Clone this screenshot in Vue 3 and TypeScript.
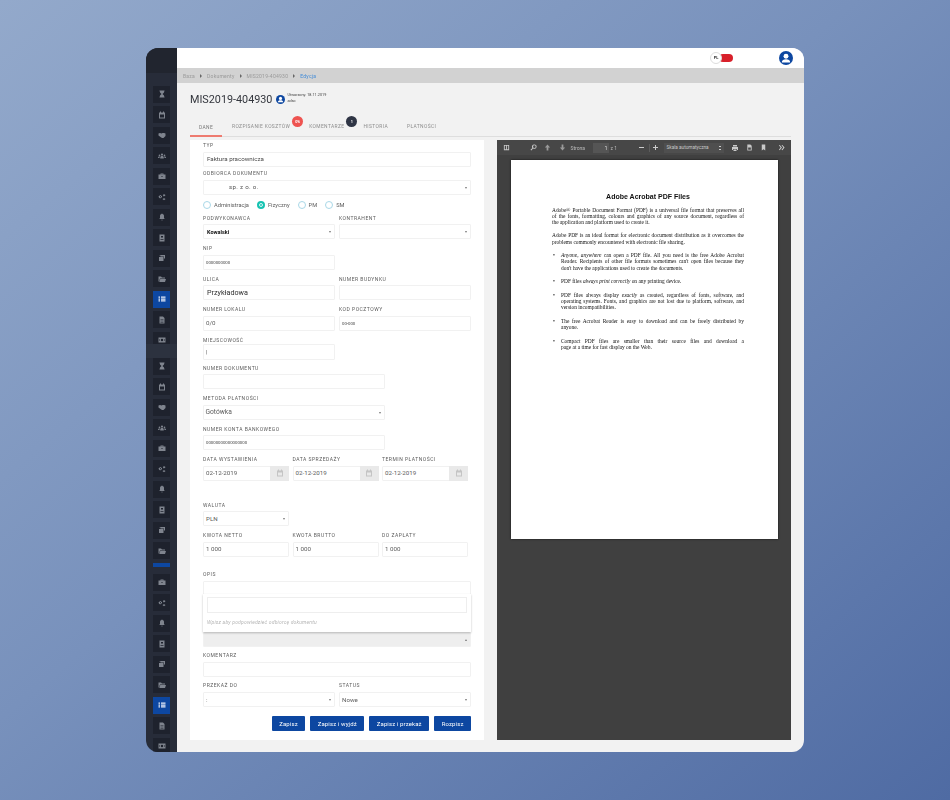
<template>
  <div class="page">
    <div class="window">
      <aside class="sidebar">
        <div class="logo"></div>
        <div class="icons first">
          <div v-for="(name, i) in firstIcons" :key="'a' + i" class="side-item" :class="{ active: name === 'list' }">
            <svg viewBox="0 0 16 16"><path :d="iconPaths[name]" /></svg>
          </div>
        </div>
        <div class="side-sep"></div>
        <div class="icons">
          <div v-for="(name, i) in secondIcons" :key="'b' + i" class="side-item">
            <svg viewBox="0 0 16 16"><path :d="iconPaths[name]" /></svg>
          </div>
          <div class="side-bar"></div>
          <div v-for="(name, i) in thirdIcons" :key="'c' + i" class="side-item" :class="{ active: name === 'list' }">
            <svg viewBox="0 0 16 16"><path :d="iconPaths[name]" /></svg>
          </div>
        </div>
      </aside>

      <div class="main">
        <header class="topbar">
          <div class="lang">
            <span class="lang-pill"></span>
            <span class="lang-knob">PL</span>
          </div>
          <svg class="avatar" viewBox="0 0 24 24">
            <circle cx="12" cy="12" r="12" fill="#0d47a1" />
            <circle cx="12" cy="9" r="4.2" fill="#fff" />
            <path d="M4.8 19.5c0-3.8 3-5.5 7.2-5.5s7.2 1.700 7.200 5.500z" fill="#fff" />
          </svg>
        </header>

        <nav class="crumbs">
          <span>Baza</span><i class="arrow"></i>
          <span>Dokumenty</span><i class="arrow"></i>
          <span>MIS2019-404930</span><i class="arrow"></i>
          <span class="current">Edycja</span>
        </nav>

        <div class="content">
          <div class="title-row">
            <h1>MIS2019-404930</h1>
            <svg class="title-user" viewBox="0 0 24 24">
              <circle cx="12" cy="12" r="12" fill="#0d47a1" />
              <circle cx="12" cy="9" r="4.2" fill="#fff" />
              <path d="M4.800 19.500c0-3.800 3-5.500 7.200-5.500s7.200 1.700 7.200 5.500z" fill="#fff" />
            </svg>
            <div class="created">
              <div>Utworzony: 18.11.2019</div>
              <div>adsc</div>
            </div>
          </div>

          <div class="tabs">
            <span class="tab active">DANE</span>
            <span class="tab">ROZPISANIE KOSZTÓW<b class="badge red">0%</b></span>
            <span class="tab">KOMENTARZE<b class="badge dark">1</b></span>
            <span class="tab">HISTORIA</span>
            <span class="tab">PŁATNOŚCI</span>
          </div>

          <div class="columns">
            <form class="form" @submit.prevent>
              <div class="field">
                <label>TYP</label>
                <div class="input small">Faktura pracownicza</div>
              </div>
              <div class="field tight">
                <label>ODBIORCA DOKUMENTU</label>
                <div class="input select"><span class="recipient">sp. z o. o.</span></div>
              </div>

              <div class="radios">
                <span class="radio"></span><span class="radio-text">Administracja</span>
                <span class="radio on"></span><span class="radio-text">Fizyczny</span>
                <span class="radio"></span><span class="radio-text">PM</span>
                <span class="radio"></span><span class="radio-text">SM</span>
              </div>

              <div class="row after-radios">
                <div class="field half">
                  <label>PODWYKONAWCA</label>
                  <div class="input select strong">Kowalski</div>
                </div>
                <div class="field half">
                  <label>KONTRAHENT</label>
                  <div class="input select"></div>
                </div>
              </div>
              <div class="row">
                <div class="field half">
                  <label>NIP</label>
                  <div class="input tiny">0000000000</div>
                </div>
              </div>
              <div class="row">
                <div class="field half">
                  <label>ULICA</label>
                  <div class="input big dark">Przykładowa</div>
                </div>
                <div class="field half">
                  <label>NUMER BUDYNKU</label>
                  <div class="input"></div>
                </div>
              </div>
              <div class="row">
                <div class="field half">
                  <label>NUMER LOKALU</label>
                  <div class="input">0/0</div>
                </div>
                <div class="field half">
                  <label>KOD POCZTOWY</label>
                  <div class="input tiny">00-000</div>
                </div>
              </div>
              <div class="row">
                <div class="field half close">
                  <label>MIEJSCOWOŚĆ</label>
                  <div class="input">|</div>
                </div>
              </div>
              <div class="row short">
                <div class="field wide">
                  <label>NUMER DOKUMENTU</label>
                  <div class="input"></div>
                </div>
              </div>
              <div class="row">
                <div class="field wide">
                  <label>METODA PŁATNOŚCI</label>
                  <div class="input medium select">Gotówka</div>
                </div>
              </div>
              <div class="row">
                <div class="field wide">
                  <label>NUMER KONTA BANKOWEGO</label>
                  <div class="input tiny">00000000000000000</div>
                </div>
              </div>
              <div class="row thirds">
                <div v-for="label in dateLabels" :key="label" class="field third">
                  <label>{{ label }}</label>
                  <div class="input date">
                    <span>02-12-2019</span>
                    <span class="addon">
                      <svg viewBox="0 0 16 16"><path :d="iconPaths.calendar" /></svg>
                    </span>
                  </div>
                </div>
              </div>
              <div class="row currency">
                <div class="field third">
                  <label>WALUTA</label>
                  <div class="input select">PLN</div>
                </div>
              </div>
              <div class="row thirds">
                <div v-for="label in amountLabels" :key="label" class="field third">
                  <label>{{ label }}</label>
                  <div class="input">1 000</div>
                </div>
              </div>
              <div class="field opis">
                <label>OPIS</label>
                <div class="input"></div>
                <div class="input select up grey"></div>
                <div class="dropdown">
                  <div class="dropdown-input"></div>
                  <div class="dropdown-hint">Wpisz aby podpowiedzieć odbiorcę dokumentu</div>
                </div>
              </div>
              <div class="field komentarz">
                <label>KOMENTARZ</label>
                <div class="input"></div>
              </div>
              <div class="row">
                <div class="field half">
                  <label>PRZEKAŻ DO</label>
                  <div class="input select">:</div>
                </div>
                <div class="field half">
                  <label>STATUS</label>
                  <div class="input select">Nowe</div>
                </div>
              </div>
              <div class="buttons">
                <button>Zapisz</button>
                <button>Zapisz i wyjdź</button>
                <button>Zapisz i przekaż</button>
                <button>Rozpisz</button>
              </div>
            </form>

            <section class="viewer">
              <div class="toolbar">
                <svg class="t-panel" viewBox="0 0 16 16"><path d="M2 2h12v12H2zM4 4v8h3V4zM9 4v8h3V4z" fill-rule="evenodd" /></svg>
                <svg class="t-search" viewBox="0 0 16 16"><path d="M10 1a5 5 0 1 1-3 9l-4 5-2-2 4.500-4A5 5 0 0 1 10 1zm0 2a3 3 0 1 0 0 6 3 3 0 0 0 0-6z" fill-rule="evenodd" /></svg>
                <svg class="t-nav" viewBox="0 0 16 16"><path d="M8 1l6 7h-4v7H6V8H2z" /></svg>
                <svg class="t-nav" viewBox="0 0 16 16"><path d="M8 15l6-7h-4V1H6v7H2z" /></svg>
                <span class="t-label">Strona</span>
                <span class="t-page">1</span>
                <span class="t-of">z 1</span>
                <span class="t-minus"></span>
                <span class="t-sep"></span>
                <span class="t-plus"></span>
                <span class="t-scale">Skala automatyczna<i></i></span>
                <svg class="t-print" viewBox="0 0 16 16"><path d="M4 2h8v3H4zM2 6h12v6h-2v-2H4v2H2zM5 11h6v3H5z" /></svg>
                <svg class="t-doc" viewBox="0 0 16 16"><path d="M3 1h7l3 3v11H3zM5 8v5h6V8z" fill-rule="evenodd" /></svg>
                <svg class="t-mark" viewBox="0 0 16 16"><path d="M4 1h8v14l-4-3-4 3z" /></svg>
                <svg class="t-more" viewBox="0 0 16 16"><path d="M2 3l2-1 5 6-5 6-2-1 4-5zM8 3l2-1 5 6-5 6-2-1 4-5z" /></svg>
              </div>
              <div class="pdf-body">
                <article class="pdf-page">
                  <h2>Adobe Acrobat PDF Files</h2>
                  <p>
                    <span class="line j">Adobe® Portable Document Format (PDF) is a universal file format that preserves all</span>
                    <span class="line j">of the fonts, formatting, colours and graphics of any source document, regardless of</span>
                    <span class="line">the application and platform used to create it.</span>
                  </p>
                  <p>
                    <span class="line j">Adobe PDF is an ideal format for electronic document distribution as it overcomes the</span>
                    <span class="line">problems commonly encountered with electronic file sharing.</span>
                  </p>
                  <ul>
                    <li>
                      <span class="line j"><em>Anyone, anywhere</em> can open a PDF file. All you need is the free Adobe Acrobat</span>
                      <span class="line j">Reader. Recipients of other file formats sometimes can't open files because they</span>
                      <span class="line">don't have the applications used to create the documents.</span>
                    </li>
                    <li>
                      <span class="line">PDF files <em>always print correctly</em> on any printing device.</span>
                    </li>
                    <li>
                      <span class="line j">PDF files always display <em>exactly</em> as created, regardless of fonts, software, and</span>
                      <span class="line j">operating systems. Fonts, and graphics are not lost due to platform, software, and</span>
                      <span class="line">version incompatibilities.</span>
                    </li>
                    <li>
                      <span class="line j">The free Acrobat Reader is easy to download and can be freely distributed by</span>
                      <span class="line">anyone.</span>
                    </li>
                    <li>
                      <span class="line j">Compact PDF files are smaller than their source files and download a</span>
                      <span class="line">page at a time for fast display on the Web.</span>
                    </li>
                  </ul>
                </article>
              </div>
            </section>
          </div>
        </div>
      </div>
    </div>
  </div>
</template>

<script setup lang="ts">
const iconPaths: Record<string, string> = {
  hourglass: 'M3 1h10v2h-1v2L9 8l3 3v2h1v2H3v-2h1v-2l3-3-3-3V3H3z',
  calendar: 'M4 1h2v2h4V1h2v2h2v12H2V3h2zM4 7v6h8V7z',
  hands: 'M1 5l3-1 3 1 2-1 3 0 3 1v5l-2 2-2 2-3 0-3-2-4-3z',
  users: 'M8 3a2.200 2.200 0 1 1 0 4.400A2.200 2.200 0 0 1 8 3zM3 5a1.700 1.700 0 1 1 0 3.400A1.700 1.700 0 0 1 3 5zm10 0a1.700 1.700 0 1 1 0 3.400A1.700 1.700 0 0 1 13 5zM4.500 13v-2c0-2 1.500-3 3.500-3s3.500 1 3.500 3v2zM0 12v-1c0-1 1-2 3-2l.5 0-.5 3zm16 0v-1c0-1-1-2-3-2l-.5 0 .5 3z',
  briefcase: 'M5 3h6v2h4v9H1V5h4zM6.500 4.500V5h3v-.5zM7 8v2h2V8z',
  cogs: 'M5.500 4l1 1.500 1.500.5v2.500l-1.500.5-1 1.500-2-.2L2 9 1 7.500 2 6l1.500-1.200zM5 6.200a1.200 1.200 0 1 0 0 2.400 1.200 1.200 0 0 0 0-2.400zM12 2l1 1 1.500.5v2L13 6l-1 1-1.500-1L10 4l1-1zM12 10l1 .8 1.500.7v1.500l-1.500.7-1 .8-1-.8-1.500-.7v-1.500l1.500-.7z',
  bell: 'M8 1a1 1 0 0 1 1 1.200c2 .5 3 2 3 4v4l1.500 2h-11L4 10.200v-4c0-2 1-3.500 3-4A1 1 0 0 1 8 1zM6.500 13.500h3a1.500 1.500 0 0 1-3 0z',
  book: 'M3 1h10v14H3zM6 4v3h4V4zM5 10v1.500h6V10z',
  clone: 'M5 2h9v7h-2V5H5zM2 6h9v8H2zM3 3h9v1H3z',
  folder: 'M1 3h5l2 2h6v2H4l-2 6H1zM4.500 8H16l-2 6H2.500z',
  list: 'M1 3h3v2.500H1zM6 3h9v2.500H6zM1 6.800h3v2.500H1zM6 6.800h9v2.500H6zM1 10.500h3V13H1zM6 10.500h9V13H6z',
  file: 'M3 1h7l3 3v11H3zM5 7v1h6V7zM5 9.500v1h6v-1zM5 12v1h6v-1z',
  money: 'M1 3h14v10H1zM8 5.500a2.500 2.500 0 1 0 0 5 2.500 2.500 0 0 0 0-5zM2.500 6v4h1V6zM12.500 6v4h1V6z',
}

const base = ['hourglass', 'calendar', 'hands', 'users', 'briefcase', 'cogs', 'bell', 'book', 'clone', 'folder']
const firstIcons = [...base, 'list', 'file', 'money']
const secondIcons = base
const thirdIcons = ['briefcase', 'cogs', 'bell', 'book', 'clone', 'folder', 'list', 'file', 'money']

const dateLabels = ['DATA WYSTAWIENIA', 'DATA SPRZEDAŻY', 'TERMIN PŁATNOŚCI']
const amountLabels = ['KWOTA NETTO', 'KWOTA BRUTTO', 'DO ZAPŁATY']
</script>

<style>
body {
  margin: 0;
  background: #6a86b4;
}
</style>

<style scoped>
.page {
  width: 950px;
  height: 800px;
  display: flex;
  align-items: center;
  justify-content: center;
  background: linear-gradient(140deg, #93a9cb 0%, #7891bc 45%, #4f6ba3 100%);
  font-family: Roboto, "Liberation Sans", sans-serif;
  overflow: hidden;
}

.window {
  width: 658px;
  height: 704px;
  display: flex;
  border-radius: 12px;
  overflow: hidden;
  filter: blur(0.45px);
}

.sidebar {
  width: 31px;
  flex: none;
  height: 704px;
  overflow: hidden;
  background: #272c39;
}

.logo {
  height: 37.5px;
  background: linear-gradient(#21252f 0 25px, #272c39 25px);
}

.icons {
  display: flex;
  flex-direction: column;
  align-items: center;
  gap: 3.5px;
}

.icons.first {
  height: 258.5px;
  overflow: hidden;
}

.side-item {
  width: 17px;
  height: 17px;
  flex: none;
  display: flex;
  align-items: center;
  justify-content: center;
  background: #1e222d;
}

.side-item svg {
  width: 8px;
  height: 8px;
  fill: #7f848e;
}

.side-item.active {
  background: #0d47a1;
}

.side-item.active svg {
  fill: #e8eefa;
}

.side-sep {
  height: 13.5px;
  background: #2c323f;
}

.side-bar {
  width: 17px;
  height: 4px;
  background: #0d47a1;
  flex: none;
  margin-bottom: 3.5px;
}

.main {
  flex: 1;
  min-width: 0;
  display: flex;
  flex-direction: column;
  background: #f2f2f2;
}

.topbar {
  height: 20px;
  flex: none;
  display: flex;
  align-items: center;
  justify-content: flex-end;
  padding-right: 11px;
  background: #fff;
}

.lang {
  position: relative;
  width: 23px;
  height: 12px;
  margin-right: 46px;
}

.lang-pill {
  position: absolute;
  left: 9px;
  top: 2px;
  width: 14px;
  height: 8px;
  border-radius: 4px;
  background: #d8202a;
}

.lang-knob {
  position: absolute;
  left: 0;
  top: 0;
  width: 12px;
  height: 12px;
  box-sizing: border-box;
  border: 1px solid #ddd;
  border-radius: 50%;
  background: #fff;
  color: #333;
  font-size: 4px;
  font-weight: 700;
  line-height: 10px;
  text-align: center;
}

.avatar {
  width: 14px;
  height: 14px;
}

.crumbs {
  height: 15px;
  flex: none;
  display: flex;
  align-items: center;
  padding-left: 6px;
  background: #d2d2d2;
  color: #9a9a9a;
  font-size: 5px;
  letter-spacing: 0.25px;
}

.crumbs .arrow {
  width: 0;
  height: 0;
  margin: 0 5px;
  border-left: 2.5px solid #666;
  border-top: 2px solid transparent;
  border-bottom: 2px solid transparent;
}

.crumbs .current {
  color: #3f8ad8;
}

.content {
  flex: 1;
  min-height: 0;
  display: flex;
  flex-direction: column;
  padding: 0 13px 12px;
}

.title-row {
  height: 30px;
  flex: none;
  display: flex;
  align-items: center;
  padding-top: 2px;
  box-sizing: border-box;
}

.title-row h1 {
  margin: 0;
  color: #33363d;
  font-size: 10.8px;
  font-weight: 400;
}

.title-user {
  width: 9px;
  height: 9px;
  margin: 0 2px 0 4px;
}

.created {
  margin-bottom: 3px;
  color: #444;
  font-size: 3.8px;
  line-height: 6px;
}

.tabs {
  height: 23px;
  flex: none;
  display: flex;
  align-items: flex-end;
  border-bottom: 1px solid #dedede;
  color: #8d8d8d;
  font-size: 4.9px;
  letter-spacing: 0.38px;
}

.tab {
  position: relative;
  height: 16px;
  line-height: 12px;
  margin-right: 19px;
}

.tab.active {
  width: 32px;
  margin-right: 10px;
  text-align: center;
  border-bottom: 2px solid #ee7b70;
  box-sizing: border-box;
  margin-bottom: -1px;
  color: #777;
}

.badge {
  position: absolute;
  top: -4.5px;
  right: -13px;
  width: 11px;
  height: 11px;
  border-radius: 50%;
  color: #fff;
  font-size: 3.8px;
  line-height: 11px;
  letter-spacing: 0;
  text-align: center;
}

.badge.red {
  background: #ee5350;
}

.badge.dark {
  background: #2f3545;
}

.columns {
  flex: 1;
  min-height: 0;
  display: flex;
  gap: 13px;
  padding-top: 3px;
}

.form {
  width: 294px;
  flex: none;
  box-sizing: border-box;
  padding: 2px 13px 9px;
  background: #fff;
}

.field label {
  display: block;
  height: 6px;
  margin-bottom: 3.7px;
  color: #5c5c5c;
  font-size: 5px;
  line-height: 6px;
  letter-spacing: 0.5px;
}

.input {
  position: relative;
  height: 15px;
  box-sizing: border-box;
  display: flex;
  align-items: center;
  padding-left: 2px;
  border: 1px solid #f1f1f1;
  border-radius: 1px;
  background: #fff;
  color: #5c5c5c;
  font-size: 6.2px;
  white-space: nowrap;
}

.input.big {
  padding-left: 3px;
  font-size: 7.2px;
}

.input.small {
  padding-left: 3px;
  font-size: 6.2px;
  color: #4a4a4a;
}

.input.medium {
  padding-left: 1.5px;
  font-size: 6.7px;
}

.input.dark {
  color: #2e2e2e;
}

.input.tiny {
  font-size: 4.3px;
  color: #444;
}

.input.strong {
  padding-left: 3px;
  color: #111;
  font-size: 5.5px;
  font-weight: 700;
}

.select::after {
  content: "";
  position: absolute;
  right: 3px;
  top: 6px;
  border-top: 2px solid #777;
  border-left: 1.5px solid transparent;
  border-right: 1.5px solid transparent;
}

.select.up::after {
  border-top: 0;
  border-bottom: 2px solid #777;
}

.recipient {
  margin-left: 23px;
  color: #555;
  letter-spacing: 0.3px;
}

.tight {
  margin-top: 3.3px;
}

.radios {
  display: flex;
  align-items: center;
  height: 10px;
  margin-top: 5px;
  color: #5c5c5c;
  font-size: 5.7px;
}

.radio {
  width: 8px;
  height: 8px;
  flex: none;
  box-sizing: border-box;
  margin-right: 3px;
  border: 1px solid #a9d8e8;
  border-radius: 50%;
}

.radio.on {
  border: 2px solid #17c3b2;
  background: #17c3b2;
  box-shadow: inset 0 0 0 1px #fff;
}

.radio-text {
  margin-right: 8px;
}

.row {
  display: flex;
  gap: 4px;
  margin-top: 5.8px;
}

.row.after-radios {
  margin-top: 5px;
}

.row.short {
  margin-top: 5px;
}

.row.thirds {
  gap: 3.5px;
}

.row.currency {
  margin-top: 20.8px;
}

.half {
  width: 132px;
}

.wide {
  width: 182px;
}

.third {
  width: 86px;
}

.close label {
  margin-bottom: 1.5px;
}

.close .input {
  height: 15.5px;
}

.date {
  padding-right: 0;
  justify-content: space-between;
}

.addon {
  width: 19px;
  height: 15px;
  margin: 0 -1px 0 0;
  display: flex;
  align-items: center;
  justify-content: center;
  background: #e9e9e9;
}

.addon svg {
  width: 8px;
  height: 8px;
  fill: #c4c4c4;
}

.opis {
  position: relative;
  margin-top: 14.3px;
}

.opis .grey {
  height: 14.5px;
  margin-top: 36.3px;
  background: #eeeeee;
}

.dropdown {
  position: absolute;
  left: 0;
  right: 0;
  top: 23px;
  height: 38px;
  box-sizing: border-box;
  padding: 3px 4px 0;
  background: #fff;
  box-shadow: 0 1px 2px rgba(0, 0, 0, 0.25);
}

.dropdown-input {
  height: 16px;
  box-sizing: border-box;
  border: 1px solid #eee;
}

.dropdown-hint {
  margin-top: 6px;
  color: #b5b5b5;
  font-size: 5px;
  font-style: italic;
  letter-spacing: 0.2px;
}

.komentarz {
  margin-top: 5.5px;
}

.buttons {
  display: flex;
  justify-content: flex-end;
  gap: 5px;
  margin-top: 9px;
}

.buttons button {
  height: 15px;
  padding: 0 7.5px;
  border: 0;
  border-radius: 1px;
  background: #0d47a1;
  color: #fff;
  font-family: inherit;
  font-size: 6px;
  font-weight: 400;
  letter-spacing: 0.12px;
}

.viewer {
  width: 294px;
  flex: none;
  display: flex;
  flex-direction: column;
  background: #404040;
}

.toolbar {
  height: 15px;
  flex: none;
  display: flex;
  align-items: center;
  background: #474747;
  color: #bbb;
  font-size: 5px;
}

.toolbar svg {
  width: 7px;
  height: 7px;
  flex: none;
  fill: #c9c9c9;
}

.t-panel {
  margin-left: 5.5px;
}

.t-search {
  margin-left: 20px;
}

.t-nav {
  margin-left: 7.5px;
  fill: #9a9a9a !important;
}

.t-label {
  margin-left: 5px;
  width: 22px;
}

.t-page {
  width: 16px;
  height: 10px;
  box-sizing: border-box;
  padding-right: 1px;
  background: #555;
  color: #ddd;
  font-size: 5.5px;
  line-height: 10px;
  text-align: right;
}

.t-of {
  margin-left: 2px;
  width: 22px;
}

.t-minus {
  width: 5px;
  height: 1.2px;
  margin-left: 6px;
  background: #ccc;
}

.t-sep {
  width: 1px;
  height: 8px;
  margin-left: 5px;
  background: #5c5c5c;
}

.t-plus {
  width: 5px;
  height: 5px;
  margin-left: 3.5px;
  background:
    linear-gradient(#ccc, #ccc) center / 100% 1.2px no-repeat,
    linear-gradient(#ccc, #ccc) center / 1.2px 100% no-repeat;
}

.t-scale {
  position: relative;
  width: 60px;
  height: 10px;
  margin-left: 5.5px;
  padding-left: 3px;
  box-sizing: border-box;
  background: #4f4f4f;
  color: #c8c8c8;
  font-size: 4.7px;
  line-height: 10px;
  white-space: nowrap;
}

.t-scale i {
  position: absolute;
  right: 3px;
  top: 3px;
  width: 2px;
  height: 4px;
  border-top: 1px solid #ccc;
  border-bottom: 1px solid #ccc;
  box-sizing: border-box;
}

.t-print {
  margin-left: 7px;
  width: 8px !important;
  height: 8px !important;
}

.t-doc {
  margin-left: 7.5px;
}

.t-mark {
  margin-left: 7px;
}

.t-more {
  margin-left: 11px;
}

.pdf-body {
  flex: 1;
  padding: 5px 13px 0 14px;
}

.pdf-page {
  width: 267px;
  height: 379px;
  box-sizing: border-box;
  padding: 33px 34px 0 41px;
  background: #fff;
  box-shadow: 0 0 2px #111;
  color: #111;
  font-family: "Liberation Serif", serif;
  font-size: 5.4px;
  line-height: 6.3px;
}

.pdf-page h2 {
  margin: 0 0 5.5px;
  color: #111;
  font-family: "Liberation Sans", sans-serif;
  font-size: 7px;
  line-height: 8px;
  font-weight: 700;
  text-align: center;
}

.pdf-page p {
  margin: 0 0 7px;
}

.pdf-page .line {
  display: block;
  white-space: nowrap;
}

.pdf-page .line.j {
  text-align: justify;
  text-align-last: justify;
  white-space: normal;
}

.pdf-page ul {
  margin: 0;
  padding: 0 0 0 9px;
  list-style: none;
}

.pdf-page li {
  position: relative;
  margin-bottom: 7.3px;
}

.pdf-page li::before {
  content: "•";
  position: absolute;
  left: -8px;
  top: 0;
}
</style>
